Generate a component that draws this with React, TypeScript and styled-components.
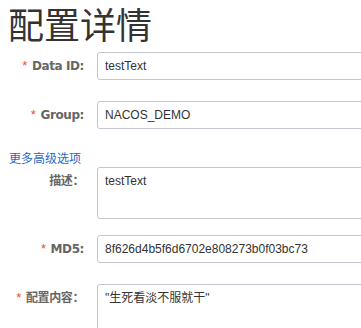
import React from "react";
import styled, { createGlobalStyle } from "styled-components";

const Global = createGlobalStyle`
  html, body { margin: 0; padding: 0; background: #fff; overflow: hidden; }
  body { font-family: "Liberation Sans", "Noto Sans CJK SC", sans-serif; }
`;

const Page = styled.div`
  padding: 0 8px;
  width: 520px;
`;

const Title = styled.h1`
  margin: 0 0 6px 0;
  font-family: "Noto Sans CJK SC", sans-serif;
  font-weight: 400;
  font-size: 36px;
  line-height: 46px;
  color: #333;
`;

const FormItem = styled.div<{ $gap?: number }>`
  display: flex;
  align-items: flex-start;
  margin-bottom: ${(p) => (p.$gap ?? 21)}px;
`;

const Label = styled.label`
  width: 76px;
  flex: none;
  padding-right: 13px;
  text-align: right;
  font-family: "DejaVu Sans", "Noto Sans CJK SC", sans-serif;
  font-weight: 700;
  font-size: 12px;
  letter-spacing: -0.4px;
  line-height: 28px;
  color: #666;
  white-space: nowrap;
`;

const Required = styled.span`
  color: #f04b2f;
  margin-right: 5px;
  font-family: "Liberation Sans", sans-serif;
  font-weight: 400;
  font-size: 13px;
`;

const Input = styled.input`
  box-sizing: border-box;
  width: 420px;
  height: 28px;
  border: 1px solid #c4c6cf;
  border-radius: 3px;
  padding: 0 7px;
  font-family: "Liberation Sans", "Noto Sans CJK SC", sans-serif;
  font-size: 12px;
  color: #333;
  background: #fff;
  outline: none;
`;

const TextArea = styled.textarea<{ $h: number }>`
  box-sizing: border-box;
  width: 420px;
  height: ${(p) => p.$h}px;
  border: 1px solid #c4c6cf;
  border-radius: 3px;
  padding: 4px 7px;
  font-family: "Liberation Sans", "Noto Sans CJK SC", sans-serif;
  font-size: 12px;
  line-height: 18px;
  color: #333;
  background: #fff;
  resize: none;
  outline: none;
  overflow: hidden;
`;

const MoreLink = styled.a`
  display: block;
  font-family: "Noto Sans CJK SC", sans-serif;
  font-size: 12px;
  line-height: 18px;
  color: #1f6bc8;
  text-decoration: none;
  padding-left: 1px;
`;

export default function App() {
  return (
    <>
      <Global />
      <Page>
        <Title>配置详情</Title>
        <FormItem>
          <Label><Required>*</Required>Data ID:</Label>
          <Input readOnly value="testText" />
        </FormItem>
        <FormItem $gap={20}>
          <Label><Required>*</Required>Group:</Label>
          <Input readOnly value="NACOS_DEMO" />
        </FormItem>
        <MoreLink href="#">更多高级选项</MoreLink>
        <FormItem $gap={16}>
          <Label>描述：</Label>
          <TextArea $h={52} readOnly value="testText" />
        </FormItem>
        <FormItem>
          <Label><Required>*</Required>MD5:</Label>
          <Input readOnly value="8f626d4b5f6d6702e808273b0f03bc73" />
        </FormItem>
        <FormItem>
          <Label><Required>*</Required>配置内容：</Label>
          <TextArea $h={120} readOnly value={'"生死看淡不服就干"'} />
        </FormItem>
      </Page>
    </>
  );
}
